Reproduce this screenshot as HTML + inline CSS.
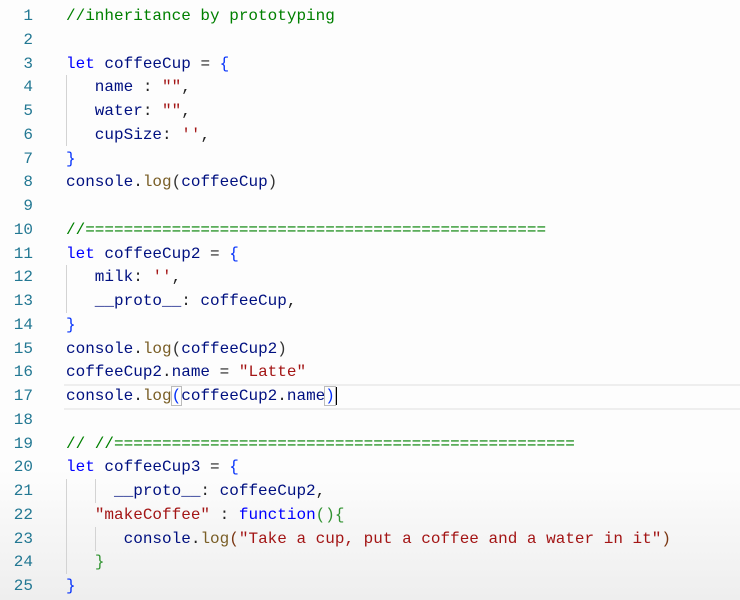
<!DOCTYPE html>
<html><head><meta charset="utf-8"><style>
body{margin:0;width:740px;height:600px;overflow:hidden;background:linear-gradient(#fdfdfd 0,#fdfdfd 470px,#eeeeee 600px);font-family:"Liberation Mono",monospace;font-size:16px;position:relative}
.l{position:absolute;left:0;height:24px;line-height:24px;white-space:pre;width:740px;margin-top:1px}
.n{position:absolute;left:0;width:33px;text-align:right;color:#237893}
.c{position:absolute;left:66px;color:#001080}
.cm{color:#008000}.k{color:#0000ff}.s{color:#a31515}.f{color:#795e26}.p{color:#222}.b1{color:#0431fa}.b2{color:#319331}.b3{color:#7b3814}.pp{color:#333}
.g{position:absolute;width:1px;background:#d3d3d3}
.hl{position:absolute;left:64px;top:384px;width:680px;height:22px;border-top:2px solid #eeeeee;border-bottom:2px solid #eeeeee}
</style></head><body>
<div class="hl"></div>
<div class="g" style="left:66px;top:75px;height:71px"></div>
<div class="g" style="left:66px;top:265px;height:48px"></div>
<div class="g" style="left:66px;top:479px;height:95px"></div>
<div class="g" style="left:95px;top:479px;height:24px"></div>
<div class="g" style="left:95px;top:527px;height:24px"></div>
<div class="l" style="top:3px"><span class="n">1</span><span class="c"><span class="cm">//inheritance by prototyping</span></span></div>
<div class="l" style="top:26.75px"><span class="n">2</span></div>
<div class="l" style="top:50.5px"><span class="n">3</span><span class="c"><span class="k">let</span> coffeeCup <span class="p">=</span> <span class="b1">{</span></span></div>
<div class="l" style="top:74.25px"><span class="n">4</span><span class="c">   name <span class="p">:</span> <span class="s">""</span><span class="p">,</span></span></div>
<div class="l" style="top:98px"><span class="n">5</span><span class="c">   water<span class="p">:</span> <span class="s">""</span><span class="p">,</span></span></div>
<div class="l" style="top:121.75px"><span class="n">6</span><span class="c">   cupSize<span class="p">:</span> <span class="s">''</span><span class="p">,</span></span></div>
<div class="l" style="top:145.5px"><span class="n">7</span><span class="c"><span class="b1">}</span></span></div>
<div class="l" style="top:169.25px"><span class="n">8</span><span class="c">console<span class="p">.</span><span class="f">log</span><span class="pp">(</span>coffeeCup<span class="pp">)</span></span></div>
<div class="l" style="top:193px"><span class="n">9</span></div>
<div class="l" style="top:216.75px"><span class="n">10</span><span class="c"><span class="cm">//================================================</span></span></div>
<div class="l" style="top:240.5px"><span class="n">11</span><span class="c"><span class="k">let</span> coffeeCup2 <span class="p">=</span> <span class="b1">{</span></span></div>
<div class="l" style="top:264.25px"><span class="n">12</span><span class="c">   milk<span class="p">:</span> <span class="s">''</span><span class="p">,</span></span></div>
<div class="l" style="top:288px"><span class="n">13</span><span class="c">   __proto__<span class="p">:</span> coffeeCup<span class="p">,</span></span></div>
<div class="l" style="top:311.75px"><span class="n">14</span><span class="c"><span class="b1">}</span></span></div>
<div class="l" style="top:335.5px"><span class="n">15</span><span class="c">console<span class="p">.</span><span class="f">log</span><span class="pp">(</span>coffeeCup2<span class="pp">)</span></span></div>
<div class="l" style="top:359.25px"><span class="n">16</span><span class="c">coffeeCup2<span class="p">.</span>name <span class="p">=</span> <span class="s">"Latte"</span></span></div>
<div class="l" style="top:383px"><span class="n">17</span><span class="c">console<span class="p">.</span><span class="f">log</span><span class="b1" style="outline:1px solid #bbb">(</span>coffeeCup2<span class="p">.</span>name<span class="b1" style="outline:1px solid #bbb">)</span><span style="border-left:2px solid #000"></span></span></div>
<div class="l" style="top:406.75px"><span class="n">18</span></div>
<div class="l" style="top:430.5px"><span class="n">19</span><span class="c"><span class="cm">// //================================================</span></span></div>
<div class="l" style="top:454.25px"><span class="n">20</span><span class="c"><span class="k">let</span> coffeeCup3 <span class="p">=</span> <span class="b1">{</span></span></div>
<div class="l" style="top:478px"><span class="n">21</span><span class="c">     __proto__<span class="p">:</span> coffeeCup2<span class="p">,</span></span></div>
<div class="l" style="top:501.75px"><span class="n">22</span><span class="c">   <span class="s">"makeCoffee"</span> <span class="p">:</span> <span class="k">function</span><span class="b2">(){</span></span></div>
<div class="l" style="top:525.5px"><span class="n">23</span><span class="c">      console<span class="p">.</span><span class="f">log</span><span class="b3">(</span><span class="s">"Take a cup, put a coffee and a water in it"</span><span class="b3">)</span></span></div>
<div class="l" style="top:549.25px"><span class="n">24</span><span class="c">   <span class="b2">}</span></span></div>
<div class="l" style="top:573px"><span class="n">25</span><span class="c"><span class="b1">}</span></span></div>
</body></html>
